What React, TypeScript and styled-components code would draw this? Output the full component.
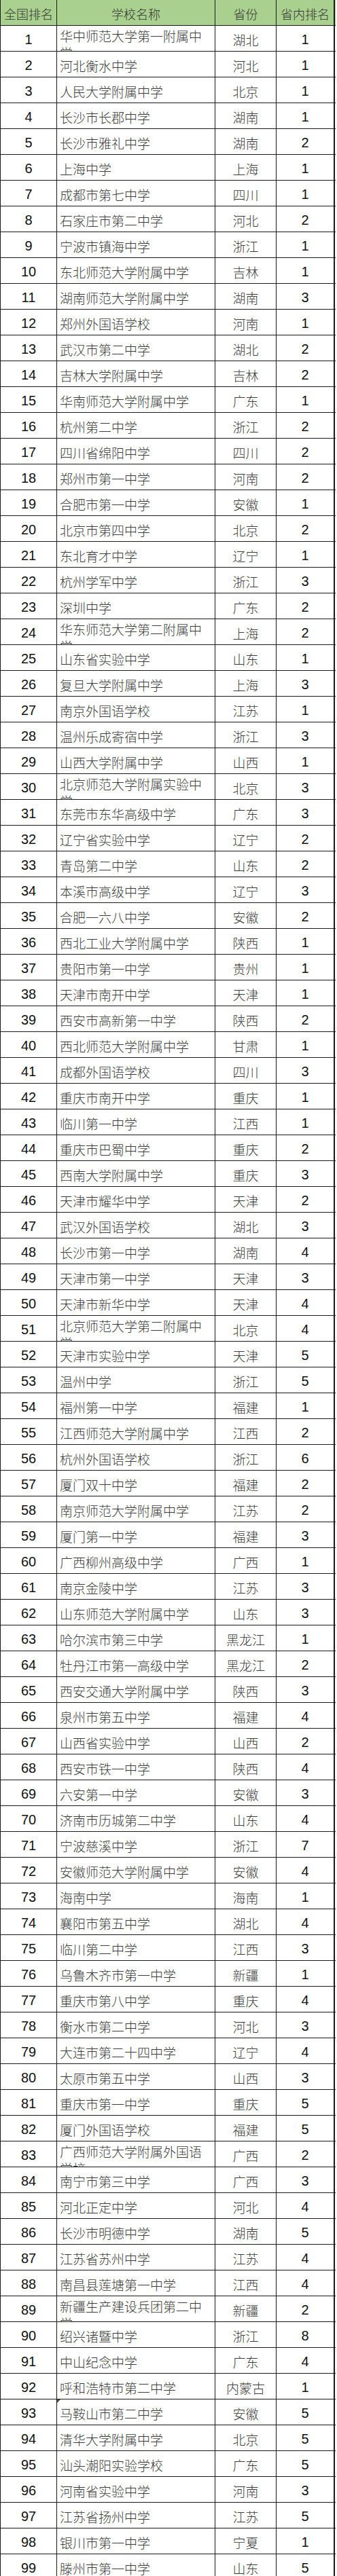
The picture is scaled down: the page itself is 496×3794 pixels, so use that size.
import React from "react";
import styled, { createGlobalStyle } from "styled-components";

const GlobalStyle = createGlobalStyle`
  html, body {
    margin: 0;
    padding: 0;
    background: #ffffff;
  }
  body {
    font-family: "Noto Sans CJK SC", "Liberation Sans", sans-serif;
  }
`;

type School = [number, string, string, number];

const schools: School[] = [
  [1, "华中师范大学第一附属中学", "湖北", 1],
  [2, "河北衡水中学", "河北", 1],
  [3, "人民大学附属中学", "北京", 1],
  [4, "长沙市长郡中学", "湖南", 1],
  [5, "长沙市雅礼中学", "湖南", 2],
  [6, "上海中学", "上海", 1],
  [7, "成都市第七中学", "四川", 1],
  [8, "石家庄市第二中学", "河北", 2],
  [9, "宁波市镇海中学", "浙江", 1],
  [10, "东北师范大学附属中学", "吉林", 1],
  [11, "湖南师范大学附属中学", "湖南", 3],
  [12, "郑州外国语学校", "河南", 1],
  [13, "武汉市第二中学", "湖北", 2],
  [14, "吉林大学附属中学", "吉林", 2],
  [15, "华南师范大学附属中学", "广东", 1],
  [16, "杭州第二中学", "浙江", 2],
  [17, "四川省绵阳中学", "四川", 2],
  [18, "郑州市第一中学", "河南", 2],
  [19, "合肥市第一中学", "安徽", 1],
  [20, "北京市第四中学", "北京", 2],
  [21, "东北育才中学", "辽宁", 1],
  [22, "杭州学军中学", "浙江", 3],
  [23, "深圳中学", "广东", 2],
  [24, "华东师范大学第二附属中学", "上海", 2],
  [25, "山东省实验中学", "山东", 1],
  [26, "复旦大学附属中学", "上海", 3],
  [27, "南京外国语学校", "江苏", 1],
  [28, "温州乐成寄宿中学", "浙江", 3],
  [29, "山西大学附属中学", "山西", 1],
  [30, "北京师范大学附属实验中学", "北京", 3],
  [31, "东莞市东华高级中学", "广东", 3],
  [32, "辽宁省实验中学", "辽宁", 2],
  [33, "青岛第二中学", "山东", 2],
  [34, "本溪市高级中学", "辽宁", 3],
  [35, "合肥一六八中学", "安徽", 2],
  [36, "西北工业大学附属中学", "陕西", 1],
  [37, "贵阳市第一中学", "贵州", 1],
  [38, "天津市南开中学", "天津", 1],
  [39, "西安市高新第一中学", "陕西", 2],
  [40, "西北师范大学附属中学", "甘肃", 1],
  [41, "成都外国语学校", "四川", 3],
  [42, "重庆市南开中学", "重庆", 1],
  [43, "临川第一中学", "江西", 1],
  [44, "重庆市巴蜀中学", "重庆", 2],
  [45, "西南大学附属中学", "重庆", 3],
  [46, "天津市耀华中学", "天津", 2],
  [47, "武汉外国语学校", "湖北", 3],
  [48, "长沙市第一中学", "湖南", 4],
  [49, "天津市第一中学", "天津", 3],
  [50, "天津市新华中学", "天津", 4],
  [51, "北京师范大学第二附属中学", "北京", 4],
  [52, "天津市实验中学", "天津", 5],
  [53, "温州中学", "浙江", 5],
  [54, "福州第一中学", "福建", 1],
  [55, "江西师范大学附属中学", "江西", 2],
  [56, "杭州外国语学校", "浙江", 6],
  [57, "厦门双十中学", "福建", 2],
  [58, "南京师范大学附属中学", "江苏", 2],
  [59, "厦门第一中学", "福建", 3],
  [60, "广西柳州高级中学", "广西", 1],
  [61, "南京金陵中学", "江苏", 3],
  [62, "山东师范大学附属中学", "山东", 3],
  [63, "哈尔滨市第三中学", "黑龙江", 1],
  [64, "牡丹江市第一高级中学", "黑龙江", 2],
  [65, "西安交通大学附属中学", "陕西", 3],
  [66, "泉州市第五中学", "福建", 4],
  [67, "山西省实验中学", "山西", 2],
  [68, "西安市铁一中学", "陕西", 4],
  [69, "六安第一中学", "安徽", 3],
  [70, "济南市历城第二中学", "山东", 4],
  [71, "宁波慈溪中学", "浙江", 7],
  [72, "安徽师范大学附属中学", "安徽", 4],
  [73, "海南中学", "海南", 1],
  [74, "襄阳市第五中学", "湖北", 4],
  [75, "临川第二中学", "江西", 3],
  [76, "乌鲁木齐市第一中学", "新疆", 1],
  [77, "重庆市第八中学", "重庆", 4],
  [78, "衡水市第二中学", "河北", 3],
  [79, "大连市第二十四中学", "辽宁", 4],
  [80, "太原市第五中学", "山西", 3],
  [81, "重庆市第一中学", "重庆", 5],
  [82, "厦门外国语学校", "福建", 5],
  [83, "广西师范大学附属外国语学校", "广西", 2],
  [84, "南宁市第三中学", "广西", 3],
  [85, "河北正定中学", "河北", 4],
  [86, "长沙市明德中学", "湖南", 5],
  [87, "江苏省苏州中学", "江苏", 4],
  [88, "南昌县莲塘第一中学", "江西", 4],
  [89, "新疆生产建设兵团第二中学", "新疆", 2],
  [90, "绍兴诸暨中学", "浙江", 8],
  [91, "中山纪念中学", "广东", 4],
  [92, "呼和浩特市第二中学", "内蒙古", 1],
  [93, "马鞍山市第二中学", "安徽", 5],
  [94, "清华大学附属中学", "北京", 5],
  [95, "汕头潮阳实验学校", "广东", 5],
  [96, "河南省实验中学", "河南", 3],
  [97, "江苏省扬州中学", "江苏", 5],
  [98, "银川市第一中学", "宁夏", 1],
  [99, "滕州市第一中学", "山东", 5],
];

const Page = styled.div`
  width: 496px;
  background: #ffffff;
`;

const Table = styled.div`
  width: 493px;
  display: flex;
  flex-direction: column;
  border-left: 1px solid #1a1a1a;
`;

const Row = styled.div<{ $header?: boolean }>`
  display: grid;
  grid-template-columns: 83px 233px 90px 86px;
  height: 38px;
  box-sizing: border-box;
  border-bottom: 1px solid #1a1a1a;
  background: ${(p) => (p.$header ? "#a9d08e" : "#ffffff")};
`;

const Cell = styled.div<{ $last?: boolean }>`
  box-sizing: border-box;
  border-right: ${(p) => (p.$last ? "2px" : "1px")} solid #1a1a1a;
  display: flex;
  align-items: center;
  justify-content: center;
  padding-top: 3px;
  overflow: hidden;
  position: relative;
`;

const HeaderCell = styled(Cell)`
  font-family: "Noto Sans CJK SC", sans-serif;
  font-weight: 300;
  font-size: 18px;
  color: #333333;
  white-space: nowrap;
`;

const NumberCell = styled(Cell)`
  font-family: "Liberation Sans", Arial, sans-serif;
  font-size: 20px;
  color: #111111;
`;

const NameCell = styled(Cell)<{ $wrap?: boolean; $flag?: boolean }>`
  justify-content: flex-start;
  align-items: ${(p) => (p.$wrap ? "flex-start" : "center")};
  padding: ${(p) => (p.$wrap ? "2px 10px 0 4px" : "3px 10px 0 4px")};
  font-family: "Noto Sans CJK SC", sans-serif;
  font-weight: 300;
  font-size: 19px;
  line-height: 25px;
  color: #3c3c3c;
  word-break: break-all;

  &::before {
    content: "";
    display: ${(p) => (p.$flag ? "block" : "none")};
    position: absolute;
    left: 0;
    top: 0;
    width: 0;
    height: 0;
    border-top: 5px solid #3a5a3a;
    border-right: 5px solid transparent;
  }
`;

const ProvinceCell = styled(Cell)`
  font-family: "Noto Sans CJK SC", sans-serif;
  font-weight: 300;
  font-size: 19px;
  color: #3c3c3c;
  white-space: nowrap;
`;

export default function App() {
  return (
    <Page>
      <GlobalStyle />
      <Table>
        <Row $header>
          <HeaderCell>全国排名</HeaderCell>
          <HeaderCell>学校名称</HeaderCell>
          <HeaderCell>省份</HeaderCell>
          <HeaderCell $last>省内排名</HeaderCell>
        </Row>
        {schools.map(([rank, name, province, local]) => (
          <Row key={rank}>
            <NumberCell>{rank}</NumberCell>
            <NameCell $wrap={name.length > 11} $flag={rank === 93}>
              {name}
            </NameCell>
            <ProvinceCell>{province}</ProvinceCell>
            <NumberCell $last>{local}</NumberCell>
          </Row>
        ))}
      </Table>
    </Page>
  );
}
